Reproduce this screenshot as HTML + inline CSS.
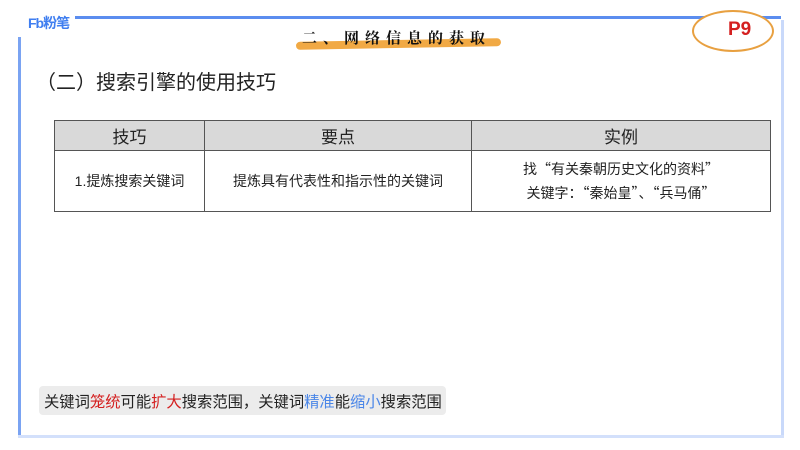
<!DOCTYPE html>
<html><head><meta charset="utf-8"><style>
*{margin:0;padding:0;box-sizing:border-box}
body{width:800px;height:450px;background:#fff;position:relative;overflow:hidden;font-family:"Liberation Sans","Noto Sans CJK SC",sans-serif;color:#222}
.abs{position:absolute}
table{border-collapse:collapse;position:absolute;left:54px;top:120px;width:717px}
td{border:1.5px solid #555;text-align:center;font-size:14px;color:#222}
tr.h td{background:#d9d9d9;height:30px;font-size:17px}
tr.r td{height:61px;line-height:24px}
.cjk{font-family:"Noto Sans CJK SC",sans-serif}
</style></head><body>
<div class="abs" style="left:28px;top:13px;font-size:14px;font-weight:bold;color:#3f7ef0;letter-spacing:-1px">Fb粉笔</div>
<div class="abs" style="left:75px;top:16px;width:706px;height:3px;background:#5b8def"></div>
<div class="abs" style="left:18px;top:37px;width:3px;height:400px;background:#7aa3f2"></div>
<div class="abs" style="left:781px;top:20px;width:3px;height:417px;background:#c9d9fa"></div>
<div class="abs" style="left:18px;top:435px;width:766px;height:3px;background:#d3e0fb"></div>
<div class="abs" style="left:296px;top:40px;width:205px;height:8px;background:#f0a030;border-radius:4px;transform:rotate(-1deg);opacity:.9"></div>
<div class="abs" style="left:302px;top:27px;font-size:15px;font-weight:bold;letter-spacing:6px;color:#111;font-family:'Noto Serif CJK SC',serif">二、网络信息的获取</div>
<div class="abs" style="left:692px;top:10px;width:82px;height:42px;border:2px solid #e8a040;border-radius:50%;background:#fff"></div>
<div class="abs" style="left:728px;top:19px;font-size:19px;font-weight:bold;color:#d42020">P9</div>
<div class="abs" style="left:36px;top:66px;font-size:20px;color:#222">（二）搜索引擎的使用技巧</div>
<table>
<tr class="h"><td style="width:150px">技巧</td><td style="width:267px">要点</td><td>实例</td></tr>
<tr class="r"><td>1.提炼搜索关键词</td><td>提炼具有代表性和指示性的关键词</td><td class="cjk">找“有关秦朝历史文化的资料”<br>关键字：“秦始皇”、“兵马俑”</td></tr>
</table>
<div class="abs" style="left:39px;top:386px;width:407px;height:29px;background:#ececec;border-radius:4px"></div>
<div class="abs" style="left:44px;top:390px;font-size:15.3px;color:#222;white-space:nowrap">关键词<span style="color:#d42020">笼统</span>可能<span style="color:#d42020">扩大</span>搜索范围，关键词<span style="color:#4a86e8">精准</span>能<span style="color:#4a86e8">缩小</span>搜索范围</div>
</body></html>
